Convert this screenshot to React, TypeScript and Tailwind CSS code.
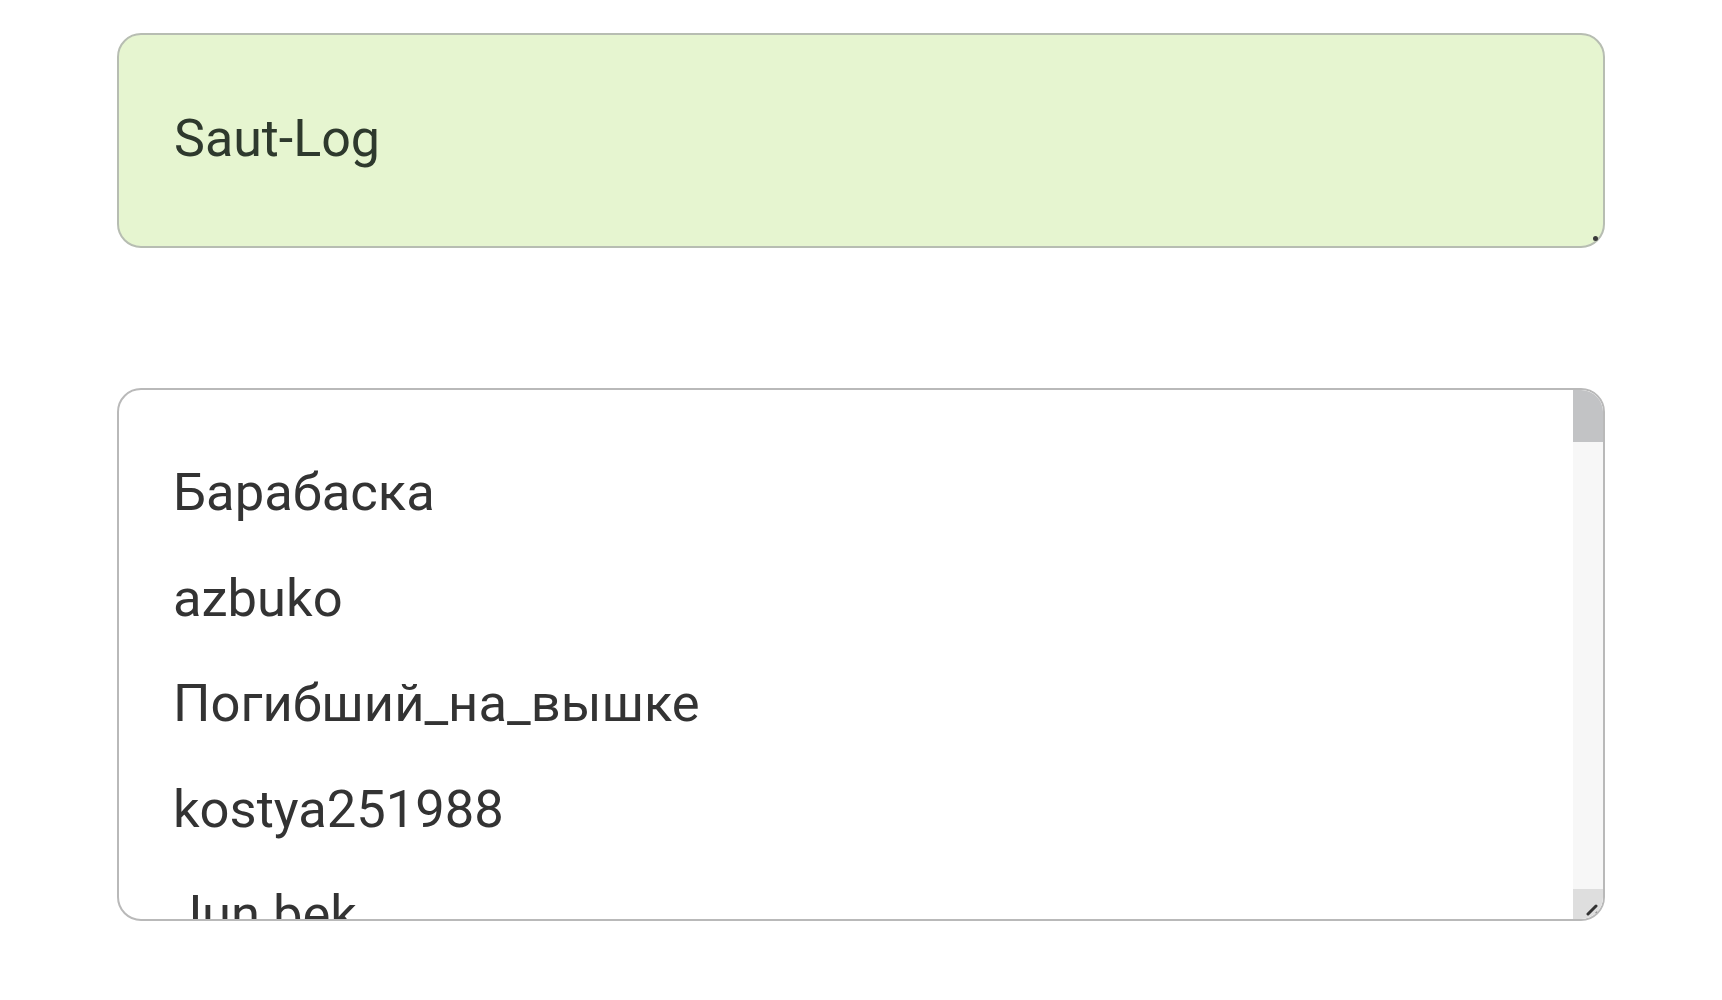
const names = ['Барабаска', 'azbuko', 'Погибший_на_вышке', 'kostya251988', 'Jun bek']

export default function App() {
  return (
    <div className="min-h-screen bg-white pt-[33px] pl-[117px] pr-[117px] font-['Roboto','Noto_Sans',sans-serif]">
      {/* name field */}
      <div className="relative flex h-[215px] items-center rounded-[24px] border-2 border-[#b7bdb2] bg-[#e6f5d0] pb-[4px] pl-[55px]">
        <span className="text-[52px] leading-none text-[#2e392d]">Saut-Log</span>
        <span className="absolute bottom-[5px] right-[5px] h-[5px] w-[5px] rounded-full bg-[#3a3a3a]"></span>
      </div>

      {/* player list */}
      <div className="mt-[140px] flex h-[533px] overflow-hidden rounded-[24px] border-2 border-[#b9b9b9] bg-white">
        <div className="flex-1 overflow-hidden pl-[54px] pt-[50px]">
          {names.map((n) => (
            <div key={n} className="text-[52.5px] leading-[105.5px] whitespace-nowrap text-[#333333]">
              {n}
            </div>
          ))}
        </div>
        <div className="flex w-[30px] flex-col bg-[#f7f7f7]">
          <div className="h-[52px] bg-[#c2c3c5]"></div>
          <div className="flex-1"></div>
          <div className="flex h-[30px] items-end justify-end bg-[#dedede] p-[3px]">
            <svg width="16" height="16" viewBox="0 0 16 16">
              <path d="M4 14 L12 6" stroke="#333" strokeWidth="3" strokeLinecap="round" />
              <circle cx="13" cy="13" r="1.5" fill="#555" />
            </svg>
          </div>
        </div>
      </div>
    </div>
  )
}
